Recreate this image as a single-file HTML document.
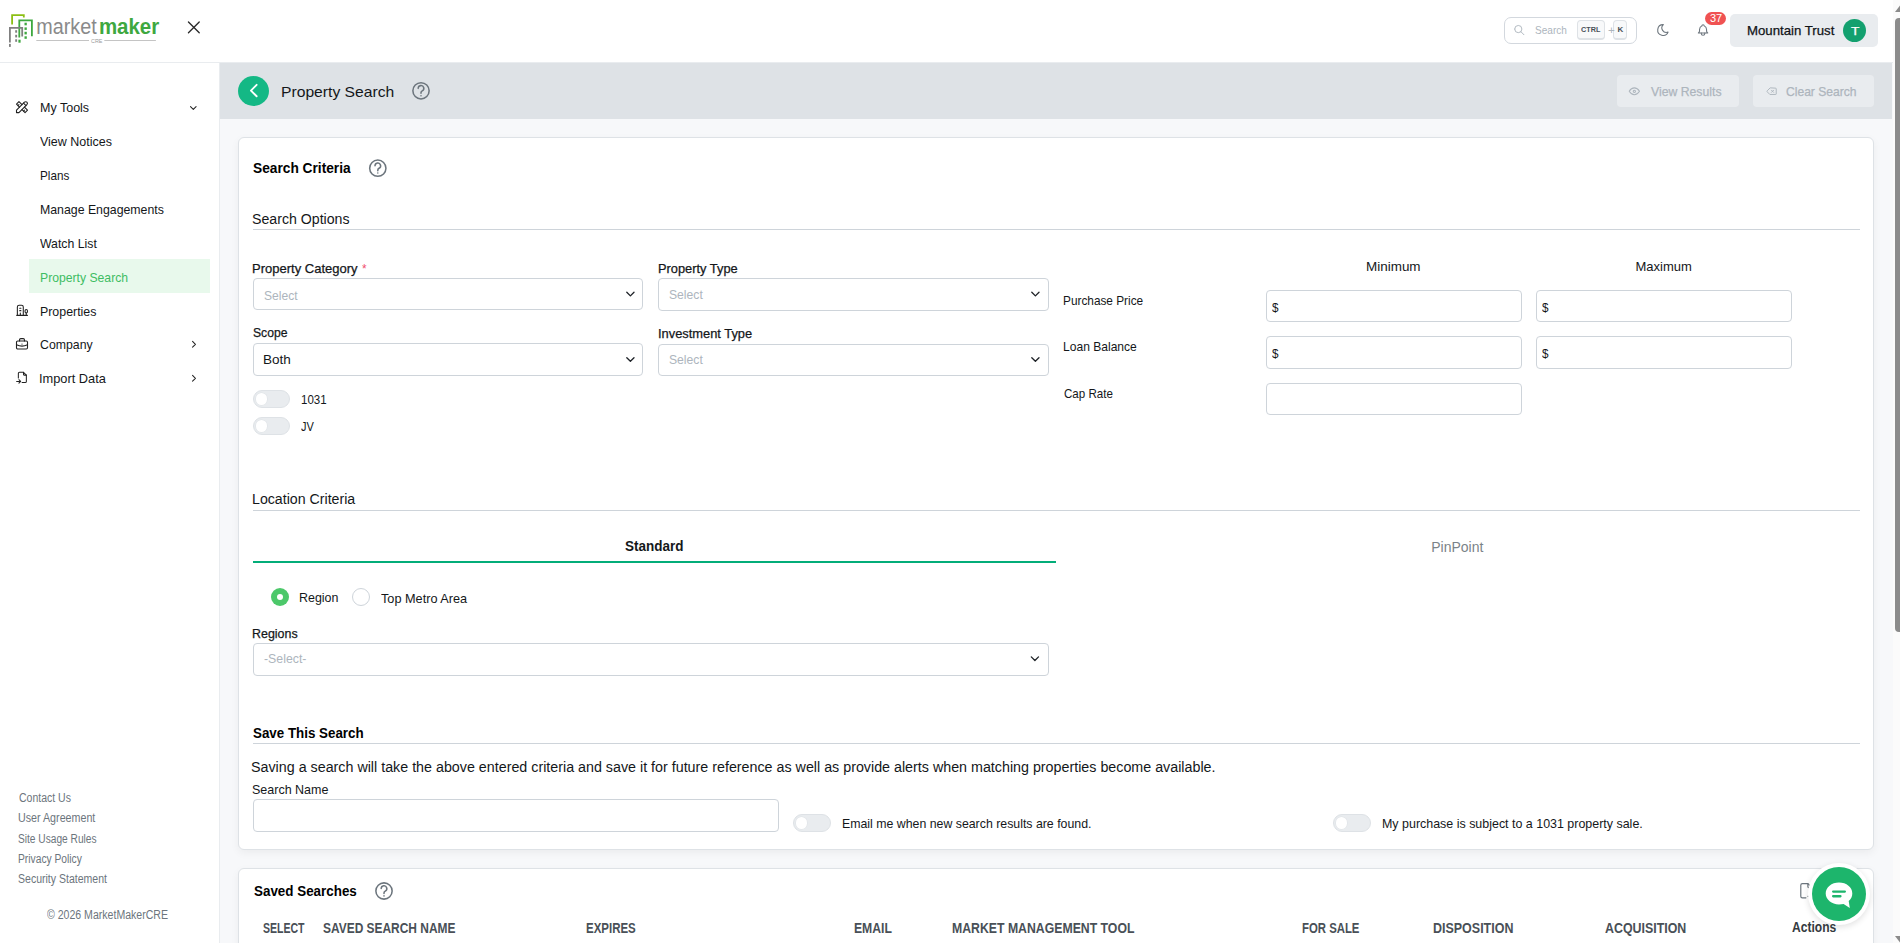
<!DOCTYPE html>
<html lang="en">
<head>
<meta charset="utf-8">
<title>Property Search - MarketMakerCRE</title>
<style>
html,body{margin:0;padding:0;}
body{width:1900px;height:943px;overflow:hidden;position:relative;background:#f7f8fa;font-family:"Liberation Sans",sans-serif;}
.r{position:absolute;box-sizing:border-box;}
.tx{position:absolute;white-space:nowrap;line-height:normal;transform-origin:0 0;font-family:"Liberation Sans",sans-serif;}
svg{position:absolute;overflow:visible;}
.inp{position:absolute;box-sizing:border-box;background:#fff;border:1px solid #ced4da;border-radius:4px;}
.tog{position:absolute;box-sizing:border-box;width:37px;height:18px;border-radius:9px;background:#e9ecef;border:1px solid #dee2e6;}
.tog::after{content:"";position:absolute;left:1.6px;top:2.2px;width:11.5px;height:11.5px;border-radius:50%;background:#fff;box-shadow:0 0 0 0.6px #dfe3e7;}
.sep{position:absolute;height:1px;background:#ced4da;}
</style>
</head>
<body>
<!-- header -->
<div class="r" style="left:0;top:0;width:1893px;height:62px;background:#fff;"></div>
<div class="r" style="left:0;top:62px;width:1893px;height:1px;background:#e9ecef;"></div>
<!-- sidebar -->
<div class="r" style="left:0;top:63px;width:219px;height:880px;background:#fff;"></div>
<div class="r" style="left:219px;top:63px;width:1px;height:880px;background:#e9ecef;"></div>
<div class="r" style="left:29px;top:259px;width:181px;height:34px;background:#e8f9ec;"></div>
<!-- title bar -->
<div class="r" style="left:220px;top:63px;width:1672px;height:56px;background:#dee2e6;"></div>
<div class="r" style="left:238px;top:76px;width:31px;height:30px;border-radius:50%;background:#14b885;"></div>
<div class="r" style="left:1617px;top:75px;width:122px;height:32px;border-radius:4px;background:#e9ecef;"></div>
<div class="r" style="left:1753px;top:75px;width:121px;height:32px;border-radius:4px;background:#e9ecef;"></div>
<!-- cards -->
<div class="r" style="left:238px;top:137px;width:1636px;height:713px;background:#fff;border:1px solid #dee2e6;border-radius:6px;box-shadow:0 3px 8px rgba(0,0,0,0.05);"></div>
<div class="r" style="left:238px;top:868px;width:1636px;height:100px;background:#fff;border:1px solid #dee2e6;border-radius:6px;box-shadow:0 3px 8px rgba(0,0,0,0.05);"></div>
<!-- header widgets -->
<div class="r" style="left:1504px;top:17px;width:133px;height:27px;border:1px solid #d3d8de;border-radius:7px;background:#fff;"></div>
<div class="r" style="left:1577px;top:20px;width:28px;height:20px;border:1px solid #dee2e6;border-bottom-width:2px;border-radius:4px;background:#f8f9fa;"></div>
<div class="r" style="left:1613px;top:20px;width:14px;height:20px;border:1px solid #dee2e6;border-bottom-width:2px;border-radius:4px;background:#f8f9fa;"></div>
<div class="r" style="left:1705px;top:12px;width:21px;height:13px;border-radius:7px;background:#f05252;"></div>
<div class="r" style="left:1730px;top:14px;width:148px;height:33px;border-radius:5px;background:#e9ecef;"></div>
<div class="r" style="left:1843px;top:19px;width:23px;height:23px;border-radius:50%;background:#13a06f;"></div>
<!-- card1 controls -->
<div class="sep" style="left:253px;top:229px;width:1607px;"></div>
<div class="inp" style="left:253px;top:278px;width:390px;height:32px;"></div>
<div class="inp" style="left:658px;top:278px;width:391px;height:33px;"></div>
<div class="inp" style="left:253px;top:343px;width:390px;height:33px;"></div>
<div class="inp" style="left:658px;top:344px;width:391px;height:32px;"></div>
<div class="tog" style="left:253px;top:390px;"></div>
<div class="tog" style="left:253px;top:417px;"></div>
<div class="inp" style="left:1266px;top:290px;width:256px;height:32px;"></div>
<div class="inp" style="left:1536px;top:290px;width:256px;height:32px;"></div>
<div class="inp" style="left:1266px;top:336px;width:256px;height:33px;"></div>
<div class="inp" style="left:1536px;top:336px;width:256px;height:33px;"></div>
<div class="inp" style="left:1266px;top:383px;width:256px;height:32px;"></div>
<div class="sep" style="left:253px;top:510px;width:1607px;"></div>
<div class="r" style="left:253px;top:561px;width:803px;height:2px;background:#03ad79;"></div>
<div class="r" style="left:271px;top:588px;width:18px;height:18px;border-radius:50%;background:#4cc86a;"></div>
<div class="r" style="left:277px;top:594px;width:6px;height:6px;border-radius:50%;background:#fff;"></div>
<div class="r" style="left:352px;top:588px;width:18px;height:18px;border-radius:50%;border:1px solid #ced4da;background:#fff;"></div>
<div class="inp" style="left:253px;top:643px;width:796px;height:33px;"></div>
<div class="sep" style="left:253px;top:743px;width:1607px;"></div>
<div class="inp" style="left:253px;top:799px;width:526px;height:33px;"></div>
<div class="tog" style="left:793px;top:814px;width:38px;"></div>
<div class="tog" style="left:1333px;top:814px;width:38px;"></div>
<!-- scrollbar -->
<div class="r" style="left:1893px;top:0;width:7px;height:943px;background:#fbfbfb;"></div>
<div class="r" style="left:1895px;top:18px;width:8px;height:614px;border-radius:4px;background:#8b8b8b;"></div>
<!-- logo -->
<svg style="left:0;top:0" width="170" height="50" viewBox="0 0 170 50">
  <g fill="none" stroke-width="1.8" stroke-linecap="butt">
    <path d="M12.1,24.6 V15.1 H23.8 V17.4" stroke="#8cbf14"/>
    <path d="M19.3,37.4 V20.4 H31.9 V36.3" stroke="#3ea83f"/>
    <path d="M9.9,42.5 V27.9 H22.2 V36.6" stroke="#808080"/>
  </g>
  <g fill="#3ea83f">
    <rect x="24.5" y="22.7" width="2.3" height="2.6"/><rect x="24.5" y="27.4" width="2.3" height="2.5"/>
    <rect x="24.5" y="31.8" width="2.3" height="2.6"/><rect x="24.5" y="36.3" width="2.3" height="2.5"/>
    <rect x="18.4" y="39.7" width="2.2" height="3"/>
  </g>
  <g fill="#808080">
    <rect x="15.2" y="30.2" width="1.9" height="2.5"/><rect x="15.2" y="34.8" width="1.9" height="2.6"/>
    <rect x="15.2" y="39.3" width="1.9" height="2.5"/><rect x="9" y="43.9" width="1.8" height="3"/>
  </g>
  <text x="36.3" y="34.4" font-family="Liberation Sans" font-size="21.5" fill="#8a8a8a" textLength="60.4" lengthAdjust="spacingAndGlyphs">market</text>
  <text x="98.9" y="34.4" font-family="Liberation Sans" font-size="21.5" font-weight="700" fill="#3ea83f" textLength="60.3" lengthAdjust="spacingAndGlyphs">maker</text>
  <rect x="36.3" y="40" width="52.7" height="1" fill="#c4c4c4"/>
  <rect x="104.3" y="40" width="51.6" height="1" fill="#c4c4c4"/>
  <text x="91" y="42.7" font-family="Liberation Sans" font-size="6" fill="#9a9a9a" textLength="11.4" lengthAdjust="spacingAndGlyphs">CRE</text>
</svg>
<svg style="left:0;top:0" width="1900" height="943" viewBox="0 0 1900 943"><g transform="translate(14.67,99.77) scale(0.6111)" fill="none" stroke="#222" stroke-width="1.8" stroke-linecap="round" stroke-linejoin="round" ><path d="M3 21h4l13 -13a1.5 1.5 0 0 0 -4 -4l-13 13v4"/><path d="M14.5 5.5l4 4"/><path d="M12 8l-5 -5l-4 4l5 5"/><path d="M7 8l-1.5 1.5"/><path d="M16 12l5 5l-4 4l-5 -5"/><path d="M16 17l-1.5 1.5"/></g>
<g transform="translate(14.99,302.94) scale(0.5927)" fill="none" stroke="#222" stroke-width="1.8" stroke-linecap="round" stroke-linejoin="round" ><path d="M3 21h18"/><path d="M19 21v-4"/><path d="M19 17a2 2 0 0 0 2 -2v-2a2 2 0 1 0 -4 0v2a2 2 0 0 0 2 2z"/><path d="M14 21v-14a3 3 0 0 0 -3 -3h-4a3 3 0 0 0 -3 3v14"/><path d="M9 17v4"/><path d="M8 13h2"/><path d="M8 9h2"/></g>
<g transform="translate(14.66,336.77) scale(0.6115)" fill="none" stroke="#222" stroke-width="1.8" stroke-linecap="round" stroke-linejoin="round" ><path d="M3 9a2 2 0 0 1 2 -2h14a2 2 0 0 1 2 2v9a2 2 0 0 1 -2 2h-14a2 2 0 0 1 -2 -2z"/><path d="M8 7v-2a2 2 0 0 1 2 -2h4a2 2 0 0 1 2 2v2"/><path d="M12 12l0 .01"/><path d="M3 13a20 20 0 0 0 18 0"/></g>
<g transform="translate(15.50,370.56) scale(0.5714)" fill="none" stroke="#222" stroke-width="1.8" stroke-linecap="round" stroke-linejoin="round" ><path d="M14 3v4a1 1 0 0 0 1 1h4"/><path d="M5 13v-8a2 2 0 0 1 2 -2h7l5 5v11a2 2 0 0 1 -2 2h-5.5m-9.5 -2h7m-3 -3l3 3l-3 3"/></g>
<g transform="translate(187.72,102.37) scale(0.4650)" fill="none" stroke="#222" stroke-width="2.2" stroke-linecap="round" stroke-linejoin="round" ><path d="M6 9l6 6l6 -6"/></g>
<g transform="translate(188.26,338.56) scale(0.4782)" fill="none" stroke="#222" stroke-width="2.2" stroke-linecap="round" stroke-linejoin="round" ><path d="M9 6l6 6l-6 6"/></g>
<g transform="translate(188.26,372.56) scale(0.4782)" fill="none" stroke="#222" stroke-width="2.2" stroke-linecap="round" stroke-linejoin="round" ><path d="M9 6l6 6l-6 6"/></g>
<g transform="translate(183.09,16.59) scale(0.8963)" fill="none" stroke="#2b2b2b" stroke-width="1.5" stroke-linecap="round" stroke-linejoin="round" ><path d="M18 6l-12 12"/><path d="M6 6l12 12"/></g>
<g transform="translate(1513.12,23.92) scale(0.5152)" fill="none" stroke="#adb5bd" stroke-width="1.8" stroke-linecap="round" stroke-linejoin="round" ><path d="M10 10m-7 0a7 7 0 1 0 14 0a7 7 0 1 0 -14 0"/><path d="M21 21l-6 -6"/></g>
<g transform="translate(1655.92,22.86) scale(0.5989)" fill="none" stroke="#6c757d" stroke-width="1.8" stroke-linecap="round" stroke-linejoin="round" ><path d="M12 3c.132 0 .263 0 .393 0a7.5 7.5 0 0 0 7.92 12.446a9 9 0 1 1 -8.313 -12.454z"/></g>
<g transform="translate(1696.01,22.96) scale(0.5867)" fill="none" stroke="#6c757d" stroke-width="1.8" stroke-linecap="round" stroke-linejoin="round" ><path d="M10 5a2 2 0 1 1 4 0a7 7 0 0 1 4 6v3a4 4 0 0 0 2 3h-16a4 4 0 0 0 2 -3v-3a7 7 0 0 1 4 -6"/><path d="M9 17v1a3 3 0 0 0 6 0v-1"/></g>
<g transform="translate(242.40,79.15) scale(0.9500)" fill="none" stroke="#ffffff" stroke-width="2" stroke-linecap="round" stroke-linejoin="round" ><path d="M15 6l-6 6l6 6"/></g>
<g transform="translate(410.16,79.96) scale(0.9036)" fill="none" stroke="#6c757d" stroke-width="1.7" stroke-linecap="round" stroke-linejoin="round" ><path d="M12 12m-9 0a9 9 0 1 0 18 0a9 9 0 1 0 -18 0"/><path d="M12 17.4v.01"/><path d="M8.9 9.3a3.1 3.1 0 1 1 4.5 2.8c-0.9 0.5 -1.4 1.1 -1.4 2.1v0.5"/></g>
<g transform="translate(366.96,157.36) scale(0.9036)" fill="none" stroke="#6c757d" stroke-width="1.7" stroke-linecap="round" stroke-linejoin="round" ><path d="M12 12m-9 0a9 9 0 1 0 18 0a9 9 0 1 0 -18 0"/><path d="M12 17.4v.01"/><path d="M8.9 9.3a3.1 3.1 0 1 1 4.5 2.8c-0.9 0.5 -1.4 1.1 -1.4 2.1v0.5"/></g>
<g transform="translate(373.16,880.16) scale(0.9036)" fill="none" stroke="#6c757d" stroke-width="1.7" stroke-linecap="round" stroke-linejoin="round" ><path d="M12 12m-9 0a9 9 0 1 0 18 0a9 9 0 1 0 -18 0"/><path d="M12 17.4v.01"/><path d="M8.9 9.3a3.1 3.1 0 1 1 4.5 2.8c-0.9 0.5 -1.4 1.1 -1.4 2.1v0.5"/></g>
<g transform="translate(1627.50,84.45) scale(0.5707)" fill="none" stroke="#adb5bd" stroke-width="1.8" stroke-linecap="round" stroke-linejoin="round" ><path d="M10 12a2 2 0 1 0 4 0a2 2 0 0 0 -4 0"/><path d="M21 12c-2.4 4 -5.4 6 -9 6c-3.6 0 -6.6 -2 -9 -6c2.4 -4 5.4 -6 9 -6c3.6 0 6.6 2 9 6"/></g>
<g transform="translate(1765.13,84.96) scale(0.5285)" fill="none" stroke="#adb5bd" stroke-width="1.8" stroke-linecap="round" stroke-linejoin="round" ><path d="M20 6a1 1 0 0 1 1 1v10a1 1 0 0 1 -1 1h-11l-5 -5a1.5 1.5 0 0 1 0 -2l5 -5z"/><path d="M12 10l4 4m0 -4l-4 4"/></g>
<g transform="translate(623.19,286.89) scale(0.6007)" fill="none" stroke="#1f2328" stroke-width="2.2" stroke-linecap="round" stroke-linejoin="round" ><path d="M6 9l6 6l6 -6"/></g>
<g transform="translate(1028.19,286.89) scale(0.6007)" fill="none" stroke="#1f2328" stroke-width="2.2" stroke-linecap="round" stroke-linejoin="round" ><path d="M6 9l6 6l6 -6"/></g>
<g transform="translate(623.19,352.29) scale(0.6007)" fill="none" stroke="#1f2328" stroke-width="2.2" stroke-linecap="round" stroke-linejoin="round" ><path d="M6 9l6 6l6 -6"/></g>
<g transform="translate(1028.19,352.29) scale(0.6007)" fill="none" stroke="#1f2328" stroke-width="2.2" stroke-linecap="round" stroke-linejoin="round" ><path d="M6 9l6 6l6 -6"/></g>
<g transform="translate(1027.69,651.49) scale(0.6007)" fill="none" stroke="#1f2328" stroke-width="2.2" stroke-linecap="round" stroke-linejoin="round" ><path d="M6 9l6 6l6 -6"/></g>
<g transform="translate(1796.84,881.22) scale(0.7897)" fill="none" stroke="#6c757d" stroke-width="1.5" stroke-linecap="round" stroke-linejoin="round" ><path d="M14 3v4a1 1 0 0 0 1 1h4"/><path d="M11.5 21h-4.5a2 2 0 0 1 -2 -2v-14a2 2 0 0 1 2 -2h7l5 5v5m-5 6h7m-3 -3l3 3l-3 3"/></g></svg>

<!-- chat -->
<div class="r" style="left:1808px;top:863px;width:62px;height:62px;border-radius:50%;background:#fff;box-shadow:0 2px 6px rgba(0,0,0,0.12);"></div>
<div class="r" style="left:1812px;top:867px;width:54px;height:54px;border-radius:50%;background:#1db56c;"></div>
<svg style="left:1795px;top:860px" width="80" height="70" viewBox="1795 860 80 70">
  <path d="M1839,882.6 C1846.5,882.6 1852.3,887.4 1852.3,893.4 C1852.3,896.4 1851,899 1848.7,900.9 L1849.8,907.9 L1843.6,904 C1842.2,904.3 1840.6,904.5 1839,904.5 C1831.6,904.5 1825.7,899.6 1825.7,893.6 C1825.7,887.5 1831.6,882.6 1839,882.6 Z" fill="#fff"/>
  <rect x="1832" y="890.4" width="14" height="2.3" rx="1.1" fill="#1db56c"/>
  <rect x="1832" y="895.1" width="9.6" height="2.3" rx="1.1" fill="#1db56c"/>
</svg>
<!-- scroll arrows -->
<svg style="left:1890px;top:0" width="10" height="943" viewBox="1890 0 10 943">
  <path d="M1895,12 L1900,5.5 L1905,12 Z" fill="#8b8b8b"/>
  <path d="M1895,936 L1905,936 L1900,942.5 Z" fill="#8b8b8b"/>
</svg>


<div class=tx style="left:1535.00px;top:23.70px;font-size:11px;font-weight:400;color:#adb5bd;transform:scaleX(0.9143);">Search</div>
<div class=tx style="left:1581.00px;top:24.70px;font-size:8px;font-weight:700;color:#495057;transform:scaleX(0.9048);">CTRL</div>
<div class=tx style="left:1607.50px;top:24.50px;font-size:10px;font-weight:400;color:#adb5bd;transform:scaleX(1.1667);">+</div>
<div class=tx style="left:1617.50px;top:24.70px;font-size:8px;font-weight:700;color:#495057;">K</div>
<div class=tx style="left:1710.00px;top:12.00px;font-size:11px;font-weight:400;color:#ffffff;">37</div>
<div class=tx style="left:1746.98px;top:22.80px;font-size:13px;font-weight:400;color:#111418;transform:scaleX(1.0153);-webkit-text-stroke:0.25px #111418;">Mountain Trust</div>
<div class=tx style="left:1851.00px;top:25.00px;font-size:11px;font-weight:400;color:#ffffff;transform:scaleX(1.2500);-webkit-text-stroke:0.25px #ffffff;">T</div>
<div class=tx style="left:40.04px;top:100.00px;font-size:13px;font-weight:400;color:#14171a;transform:scaleX(0.9620);">My Tools</div>
<div class=tx style="left:40.30px;top:133.70px;font-size:13px;font-weight:400;color:#14171a;transform:scaleX(0.9600);">View Notices</div>
<div class=tx style="left:40.10px;top:168.00px;font-size:13px;font-weight:400;color:#14171a;transform:scaleX(0.9000);">Plans</div>
<div class=tx style="left:40.05px;top:202.10px;font-size:13px;font-weight:400;color:#14171a;transform:scaleX(0.9469);">Manage Engagements</div>
<div class=tx style="left:40.30px;top:235.50px;font-size:13px;font-weight:400;color:#14171a;transform:scaleX(0.9433);">Watch List</div>
<div class=tx style="left:39.86px;top:269.60px;font-size:13px;font-weight:400;color:#3ebd63;transform:scaleX(0.9376);">Property Search</div>
<div class=tx style="left:40.05px;top:304.20px;font-size:13px;font-weight:400;color:#14171a;transform:scaleX(0.9517);">Properties</div>
<div class=tx style="left:40.20px;top:337.30px;font-size:13px;font-weight:400;color:#14171a;transform:scaleX(0.9464);">Company</div>
<div class=tx style="left:39.21px;top:370.80px;font-size:13px;font-weight:400;color:#14171a;transform:scaleX(0.9851);">Import Data</div>
<div class=tx style="left:18.70px;top:791.10px;font-size:12px;font-weight:400;color:#6c757d;transform:scaleX(0.8746);">Contact Us</div>
<div class=tx style="left:17.81px;top:811.30px;font-size:12px;font-weight:400;color:#6c757d;transform:scaleX(0.8919);">User Agreement</div>
<div class=tx style="left:17.85px;top:832.00px;font-size:12px;font-weight:400;color:#6c757d;transform:scaleX(0.8478);">Site Usage Rules</div>
<div class=tx style="left:17.84px;top:851.70px;font-size:12px;font-weight:400;color:#6c757d;transform:scaleX(0.8554);">Privacy Policy</div>
<div class=tx style="left:17.82px;top:871.80px;font-size:12px;font-weight:400;color:#6c757d;transform:scaleX(0.8772);">Security Statement</div>
<div class=tx style="left:46.80px;top:907.60px;font-size:12px;font-weight:400;color:#6c757d;transform:scaleX(0.8796);">© 2026 MarketMakerCRE</div>
<div class=tx style="left:281.46px;top:82.70px;font-size:15px;font-weight:400;color:#14171a;transform:scaleX(1.0449);">Property Search</div>
<div class=tx style="left:1650.50px;top:84.00px;font-size:13px;font-weight:400;color:#adb5bd;transform:scaleX(0.9413);-webkit-text-stroke:0.25px #adb5bd;">View Results</div>
<div class=tx style="left:1786.30px;top:84.00px;font-size:13px;font-weight:400;color:#adb5bd;transform:scaleX(0.9303);-webkit-text-stroke:0.25px #adb5bd;">Clear Search</div>
<div class=tx style="left:252.80px;top:159.90px;font-size:14px;font-weight:700;color:#000000;transform:scaleX(0.9800);">Search Criteria</div>
<div class=tx style="left:251.79px;top:210.70px;font-size:14px;font-weight:400;color:#14171a;transform:scaleX(1.0105);">Search Options</div>
<div class=tx style="left:252.10px;top:260.90px;font-size:13px;font-weight:400;color:#14171a;-webkit-text-stroke:0.25px #14171a;">Property Category</div>
<div class=tx style="left:361.80px;top:261.00px;font-size:13px;font-weight:400;color:#f0506e;transform:scaleX(0.9000);">*</div>
<div class=tx style="left:263.77px;top:288.00px;font-size:13px;font-weight:400;color:#adb5bd;transform:scaleX(0.9286);">Select</div>
<div class=tx style="left:657.71px;top:260.80px;font-size:13px;font-weight:400;color:#14171a;transform:scaleX(0.9875);-webkit-text-stroke:0.25px #14171a;">Property Type</div>
<div class=tx style="left:669.17px;top:286.80px;font-size:13px;font-weight:400;color:#adb5bd;transform:scaleX(0.9343);">Select</div>
<div class=tx style="left:252.60px;top:325.30px;font-size:13px;font-weight:400;color:#14171a;transform:scaleX(0.9351);-webkit-text-stroke:0.25px #14171a;">Scope</div>
<div class=tx style="left:263.36px;top:352.40px;font-size:13px;font-weight:400;color:#14171a;transform:scaleX(1.0400);">Both</div>
<div class=tx style="left:657.71px;top:325.70px;font-size:13px;font-weight:400;color:#14171a;transform:scaleX(0.9894);-webkit-text-stroke:0.25px #14171a;">Investment Type</div>
<div class=tx style="left:669.17px;top:352.40px;font-size:13px;font-weight:400;color:#adb5bd;transform:scaleX(0.9343);">Select</div>
<div class=tx style="left:301.41px;top:391.90px;font-size:13px;font-weight:400;color:#14171a;transform:scaleX(0.8857);">1031</div>
<div class=tx style="left:301.00px;top:418.60px;font-size:13px;font-weight:400;color:#14171a;transform:scaleX(0.8467);">JV</div>
<div class=tx style="left:1366.16px;top:259.10px;font-size:13px;font-weight:400;color:#14171a;transform:scaleX(1.0353);">Minimum</div>
<div class=tx style="left:1635.50px;top:259.00px;font-size:13px;font-weight:400;color:#14171a;">Maximum</div>
<div class=tx style="left:1063.39px;top:292.80px;font-size:13px;font-weight:400;color:#14171a;transform:scaleX(0.9092);">Purchase Price</div>
<div class=tx style="left:1062.87px;top:339.30px;font-size:13px;font-weight:400;color:#14171a;transform:scaleX(0.9282);">Loan Balance</div>
<div class=tx style="left:1063.80px;top:386.40px;font-size:13px;font-weight:400;color:#14171a;transform:scaleX(0.8909);">Cap Rate</div>
<div class=tx style="left:1271.70px;top:299.70px;font-size:13px;font-weight:400;color:#14171a;transform:scaleX(0.9000);">$</div>
<div class=tx style="left:1542.00px;top:299.70px;font-size:13px;font-weight:400;color:#14171a;transform:scaleX(0.9000);">$</div>
<div class=tx style="left:1271.70px;top:345.70px;font-size:13px;font-weight:400;color:#14171a;transform:scaleX(0.9000);">$</div>
<div class=tx style="left:1542.00px;top:345.70px;font-size:13px;font-weight:400;color:#14171a;transform:scaleX(0.9000);">$</div>
<div class=tx style="left:252.19px;top:490.70px;font-size:14px;font-weight:400;color:#14171a;transform:scaleX(1.0129);">Location Criteria</div>
<div class=tx style="left:625.30px;top:537.70px;font-size:14px;font-weight:700;color:#14171a;transform:scaleX(0.9633);">Standard</div>
<div class=tx style="left:1431.20px;top:539.30px;font-size:14px;font-weight:400;color:#7b8389;">PinPoint</div>
<div class=tx style="left:298.94px;top:589.70px;font-size:13px;font-weight:400;color:#14171a;transform:scaleX(0.9575);">Region</div>
<div class=tx style="left:381.10px;top:590.70px;font-size:13px;font-weight:400;color:#14171a;transform:scaleX(0.9773);">Top Metro Area</div>
<div class=tx style="left:251.94px;top:626.00px;font-size:13px;font-weight:400;color:#14171a;transform:scaleX(0.9574);-webkit-text-stroke:0.25px #14171a;">Regions</div>
<div class=tx style="left:264.30px;top:651.00px;font-size:13px;font-weight:400;color:#adb5bd;transform:scaleX(0.9467);">-Select-</div>
<div class=tx style="left:252.90px;top:724.80px;font-size:14px;font-weight:700;color:#000000;transform:scaleX(0.9543);">Save This Search</div>
<div class=tx style="left:251.28px;top:758.90px;font-size:14px;font-weight:400;color:#14171a;transform:scaleX(1.0201);">Saving a search will take the above entered criteria and save it for future reference as well as provide alerts when matching properties become available.</div>
<div class=tx style="left:251.94px;top:781.80px;font-size:13px;font-weight:400;color:#14171a;transform:scaleX(0.9615);">Search Name</div>
<div class=tx style="left:841.65px;top:815.80px;font-size:13px;font-weight:400;color:#14171a;transform:scaleX(0.9483);">Email me when new search results are found.</div>
<div class=tx style="left:1381.64px;top:815.90px;font-size:13px;font-weight:400;color:#14171a;transform:scaleX(0.9572);">My purchase is subject to a 1031 property sale.</div>
<div class=tx style="left:253.80px;top:883.20px;font-size:14px;font-weight:700;color:#000000;transform:scaleX(0.9570);">Saved Searches</div>
<div class=tx style="left:262.90px;top:920.00px;font-size:14px;font-weight:700;color:#495057;transform:scaleX(0.7518);">SELECT</div>
<div class=tx style="left:322.90px;top:920.00px;font-size:14px;font-weight:700;color:#495057;transform:scaleX(0.8529);">SAVED SEARCH NAME</div>
<div class=tx style="left:585.68px;top:920.00px;font-size:14px;font-weight:700;color:#495057;transform:scaleX(0.8203);">EXPIRES</div>
<div class=tx style="left:854.33px;top:919.70px;font-size:14px;font-weight:700;color:#495057;transform:scaleX(0.8698);">EMAIL</div>
<div class=tx style="left:952.42px;top:919.70px;font-size:14px;font-weight:700;color:#495057;transform:scaleX(0.8763);">MARKET MANAGEMENT TOOL</div>
<div class=tx style="left:1302.39px;top:920.00px;font-size:14px;font-weight:700;color:#495057;transform:scaleX(0.8114);">FOR SALE</div>
<div class=tx style="left:1433.41px;top:920.00px;font-size:14px;font-weight:700;color:#495057;transform:scaleX(0.8910);">DISPOSITION</div>
<div class=tx style="left:1605.00px;top:920.00px;font-size:14px;font-weight:700;color:#495057;transform:scaleX(0.8857);">ACQUISITION</div>
<div class=tx style="left:1792.10px;top:919.40px;font-size:14px;font-weight:700;color:#343a40;transform:scaleX(0.8608);">Actions</div>
</body>
</html>
